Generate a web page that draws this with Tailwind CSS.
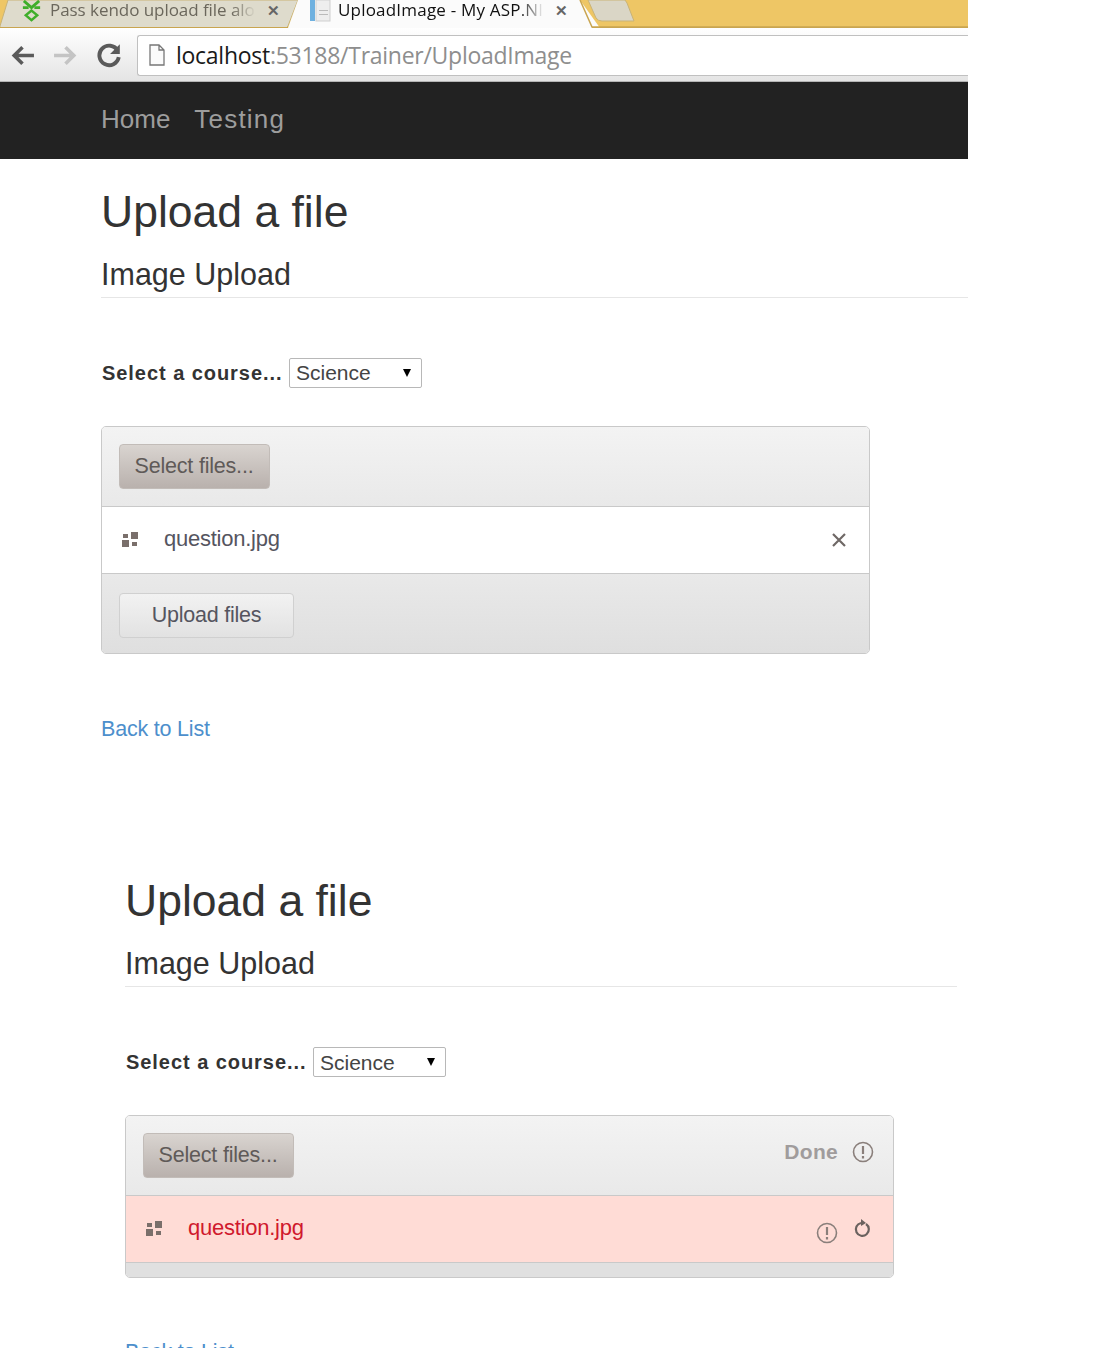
<!DOCTYPE html>
<html lang="en">
  <head>
    <meta charset="UTF-8" />
    <title>UploadImage - My ASP.NET Application</title>
    <script src="https://cdn.jsdelivr.net/npm/@tailwindcss/browser@4"></script>
  </head>
  <body class="bg-white font-['Liberation_Sans',sans-serif] text-[#333] h-[1364px] overflow-hidden">
    <!-- browser chrome -->
    <div class="w-[968px]">
      <div class="relative h-[28px] bg-[#eec665] flex items-center overflow-hidden">
        <svg class="absolute inset-0" width="968" height="28" viewBox="0 0 968 28">
          <path d="M0 26 L8 0 H298 L288 26 Q287 28 284 28 H0 Z" fill="#dedbcc" stroke="#c9b377" />
          <path d="M298 0 L288 28 H600 L580 0 Z" fill="#fbfbfb" />
          <path d="M580 0 L592 27 H968" fill="none" stroke="#c9a550" stroke-width="1.5" />
          <path d="M588 0 L596 18 Q598 21 602 21 H634 L627 3 L625 0 Z" fill="#dad6c6" stroke="#c9b377" />
          <path d="M0 27.5 H288 M592 27.5 H968" stroke="#c9a550" />
        </svg>
        <div class="relative flex items-center w-[291px] pl-[20px] h-full -mt-[8px]">
          <svg class="w-[23px] h-[23px] shrink-0" viewBox="0 0 24 24" fill="none" stroke="#3fae2a" stroke-width="3">
            <path d="M4 2 L12 9 L20 2" />
            <path d="M3 9 H9 M15 9 H21" />
            <path d="M12 12 L6 17 L12 22 L18 17 Z" stroke-width="2.5" />
          </svg>
          <span class="ml-[7px] w-[206px] overflow-hidden whitespace-nowrap font-['Open_Sans',sans-serif] text-[17px] leading-[20px] tracking-[-0.05px] text-[#6b675c] [mask-image:linear-gradient(to_right,black_88%,transparent)]">Pass kendo upload file alo</span>
          <span class="ml-[11px] text-[#666] text-[15px] font-bold leading-none">✕</span>
        </div>
        <div class="relative flex items-center pl-[18px] h-full -mt-[8px]">
          <svg class="w-[23px] h-[23px] shrink-0" viewBox="0 0 23 23">
            <rect x="1" y="1" width="5" height="21" fill="#6fb1e0" />
            <rect x="7" y="1" width="14" height="21" fill="#eeeeee" stroke="#cfcfcf" />
            <rect x="10" y="11" width="9" height="1" fill="#bbb" />
            <rect x="10" y="15" width="9" height="1" fill="#bbb" />
          </svg>
          <span class="ml-[6px] w-[206px] overflow-hidden whitespace-nowrap font-['Open_Sans',sans-serif] text-[17px] leading-[20px] tracking-[0.2px] text-[#111] [mask-image:linear-gradient(to_right,black_88%,transparent)]">UploadImage - My ASP.NI</span>
          <span class="ml-[11px] text-[#666] text-[15px] font-bold leading-none">✕</span>
        </div>
      </div>
      <div class="h-[54px] bg-gradient-to-b from-white to-[#e4e4e4] border-b border-[#b5b5b5] flex items-center pl-[10px] pt-[1px]">
        <svg class="w-[25px] h-[25px]" viewBox="0 0 24 24" fill="none" stroke="#5a5a5a" stroke-width="3.4">
          <path d="M23 12 H4 M12 4 L4 12 L12 20" />
        </svg>
        <svg class="w-[25px] h-[25px] ml-[18px]" viewBox="0 0 24 24" fill="none" stroke="#c4c4c4" stroke-width="3.4">
          <path d="M1 12 H20 M12 4 L20 12 L12 20" />
        </svg>
        <svg class="w-[26px] h-[26px] ml-[18px]" viewBox="0 0 24 24" fill="none" stroke="#5a5a5a" stroke-width="3.6">
          <path d="M20 8 A9 9 0 1 0 21 14" />
          <path d="M22 2 V11 H13 Z" fill="#5a5a5a" stroke="none" />
        </svg>
        <div class="ml-[15px] flex-1 h-[41px] bg-white border border-[#c0c0c0] border-r-0 rounded-l-[3px] flex items-center pl-[9px]">
          <svg class="w-[20px] h-[24px] shrink-0" viewBox="0 0 20 24" fill="#fbfbfb" stroke="#777" stroke-width="1.3">
            <path d="M3 2 H12 L17 7 V22 H3 Z M12 2 V7 H17" />
          </svg>
          <span class="ml-[9px] font-['Open_Sans',sans-serif] text-[23px] tracking-[-0.27px] text-[#1a1a1a]">localhost<span class="text-[#8e8e8e]">:53188/Trainer/UploadImage</span></span>
        </div>
      </div>
      <nav class="h-[77px] bg-[#222] flex items-center gap-[24px] pl-[101px] pb-[2px]">
        <a class="text-[26px] text-[#9d9d9d]">Home</a>
        <a class="text-[26px] tracking-[1.2px] text-[#9d9d9d]">Testing</a>
      </nav>

      <!-- first upload, file queued -->
      <section class="pl-[101px]">
        <h1 class="mt-[26px] text-[44.5px] leading-[54px]">Upload a file</h1>
        <h2 class="mt-[17px] text-[30.5px] leading-[36px] border-b border-[#e6e6e6] pb-[5px]">Image Upload</h2>
        <div class="mt-[60px] flex items-center">
          <label class="text-[20px] font-bold tracking-[0.95px] w-[188px] pl-[1px]">Select a course...</label>
          <div class="w-[133px] h-[30px] border border-[#b8b8b8] rounded-[2px] flex items-center justify-between pl-[6px] pr-[10px] text-[21px] text-[#444]">
            Science<span class="border-x-[4px] border-x-transparent border-t-[8px] border-t-black"></span>
          </div>
        </div>
        <div class="mt-[38px] w-[769px] border border-[#c9c9c9] rounded-[5px] overflow-hidden">
          <div class="h-[80px] bg-gradient-to-b from-[#f3f3f3] to-[#e9e9e9] border-b border-[#c9c9c9] flex items-center pl-[17px]">
            <div class="w-[151px] h-[45px] rounded-[4px] border border-[#c2bcb8] bg-gradient-to-b from-[#d9d4d0] to-[#b9b1ad] flex items-center justify-center text-[21.5px] text-[#5f5a58] tracking-[-0.2px] pb-[1px] pr-[1px]">Select files...</div>
          </div>
          <div class="h-[67px] bg-white border-b border-[#c9c9c9] flex items-center pl-[19px] pr-[22px] pb-[3px]">
            <svg class="w-[18px] h-[18px] shrink-0 mt-[3px]" viewBox="0 0 18 18" fill="#7a6f6b">
              <rect x="1" y="9" width="7" height="7" />
              <rect x="2" y="3" width="5" height="4" />
              <rect x="10" y="1" width="7" height="7" />
              <rect x="11" y="11" width="5" height="4" />
            </svg>
            <span class="ml-[25px] text-[22px] tracking-[-0.25px] text-[#55555f]">question.jpg</span>
            <svg class="ml-auto w-[16px] h-[16px] mt-[3px]" viewBox="0 0 16 16" stroke="#6f6866" stroke-width="2.2">
              <path d="M2 2 L14 14 M14 2 L2 14" />
            </svg>
          </div>
          <div class="h-[79px] bg-gradient-to-b from-[#e9e9e9] to-[#dfdfdf] flex items-center pl-[17px] pt-[3px]">
            <div class="w-[175px] h-[45px] rounded-[4px] border border-[#d0d0d0] bg-gradient-to-b from-[#f2f2f2] to-[#e2e2e2] flex items-center justify-center text-[21.5px] tracking-[-0.25px] text-[#55555f]">Upload files</div>
          </div>
        </div>
        <a class="block mt-[59px] text-[21.5px] tracking-[-0.2px] text-[#4d8fcc]">Back to List</a>
      </section>

      <!-- second upload, failed -->
      <section class="mt-[129px] ml-[125px] w-[832px]">
        <h1 class="text-[44.5px] leading-[54px]">Upload a file</h1>
        <h2 class="mt-[17px] text-[30.5px] leading-[36px] border-b border-[#e6e6e6] pb-[5px]">Image Upload</h2>
        <div class="mt-[60px] flex items-center">
          <label class="text-[20px] font-bold tracking-[0.95px] w-[188px] pl-[1px]">Select a course...</label>
          <div class="w-[133px] h-[30px] border border-[#b8b8b8] rounded-[2px] flex items-center justify-between pl-[6px] pr-[10px] text-[21px] text-[#444]">
            Science<span class="border-x-[4px] border-x-transparent border-t-[8px] border-t-black"></span>
          </div>
        </div>
        <div class="mt-[38px] w-[769px] border border-[#c9c9c9] rounded-[5px] overflow-hidden">
          <div class="h-[80px] bg-gradient-to-b from-[#f3f3f3] to-[#e9e9e9] border-b border-[#c9c9c9] flex items-center pl-[17px] pr-[19px]">
            <div class="w-[151px] h-[45px] rounded-[4px] border border-[#c2bcb8] bg-gradient-to-b from-[#d9d4d0] to-[#b9b1ad] flex items-center justify-center text-[21.5px] text-[#5f5a58] tracking-[-0.2px] pb-[1px] pr-[1px]">Select files...</div>
            <span class="ml-auto mb-[8px] text-[21px] font-bold tracking-[0.3px] text-[#a09c9c]">Done</span>
            <svg class="ml-[14px] mb-[8px] w-[22px] h-[22px]" viewBox="0 0 22 22" fill="none" stroke="#8a7f7b" stroke-width="1.6">
              <circle cx="11" cy="11" r="9.5" />
              <path d="M11 5 V13 M11 15 V17.5" stroke-width="2.2" />
            </svg>
          </div>
          <div class="h-[67px] bg-[#ffdcd6] border-b border-[#c9c9c9] flex items-center pl-[19px] pr-[21px] pb-[3px]">
            <svg class="w-[18px] h-[18px] shrink-0 mt-[3px]" viewBox="0 0 18 18" fill="#7a6f6b">
              <rect x="1" y="9" width="7" height="7" />
              <rect x="2" y="3" width="5" height="4" />
              <rect x="10" y="1" width="7" height="7" />
              <rect x="11" y="11" width="5" height="4" />
            </svg>
            <span class="ml-[25px] text-[22px] tracking-[-0.25px] text-[#d0192d]">question.jpg</span>
            <svg class="ml-auto w-[22px] h-[22px] mt-[10px]" viewBox="0 0 22 22" fill="none" stroke="#8a7f7b" stroke-width="1.6">
              <circle cx="11" cy="11" r="9.5" />
              <path d="M11 5 V13 M11 15 V17.5" stroke-width="2.2" />
            </svg>
            <svg class="ml-[14px] w-[20px] h-[20px]" viewBox="0 0 20 20" fill="none" stroke="#6b625f" stroke-width="2.2">
              <path d="M9 5 A6.5 6.5 0 1 0 14 6" />
              <path d="M9 1 L14 5 L9 8 Z" fill="#6b625f" stroke="none" />
            </svg>
          </div>
          <div class="h-[14px] bg-[#e0e0e0]"></div>
        </div>
        <div class="mt-[62px] h-[8px] overflow-hidden">
          <a class="block text-[21.5px] leading-[25px] tracking-[-0.2px] text-[#4d8fcc]">Back to List</a>
        </div>
      </section>
    </div>
  </body>
</html>
